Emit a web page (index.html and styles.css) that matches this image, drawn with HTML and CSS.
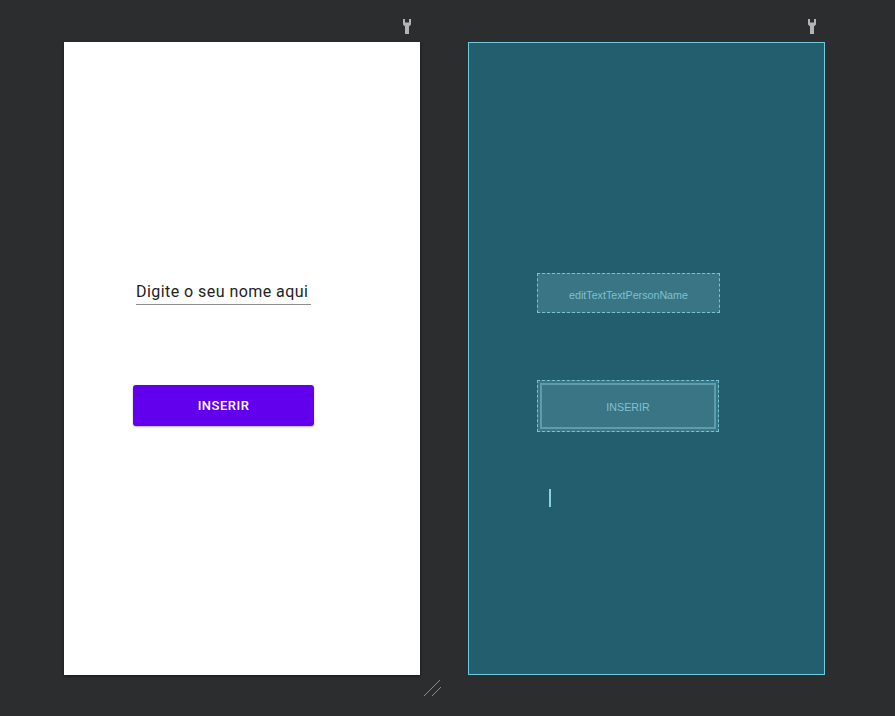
FILE: index.html
```html
<!DOCTYPE html>
<html>
<head>
<meta charset="utf-8">
<link rel="stylesheet" href="styles.css">
</head>
<body>
<div class="surface">
  <div class="panel">
    <div class="panel-head">
      <svg class="wrench" width="8" height="15" viewBox="0 0 8 15"><path d="M0 0h2v3.5h4V0h2v5.5L6 7.5V15H2V7.5L0 5.5z" fill="#b4b4b4"/></svg>
    </div>
    <div class="screen design">
      <div class="field">Digite o seu nome aqui</div>
      <div class="btn">INSERIR</div>
    </div>
  </div>
  <div class="panel">
    <div class="panel-head">
      <svg class="wrench" width="8" height="15" viewBox="0 0 8 15"><path d="M0 0h2v3.5h4V0h2v5.5L6 7.5V15H2V7.5L0 5.5z" fill="#b4b4b4"/></svg>
    </div>
    <div class="screen blueprint">
      <div class="bp-field">editTextTextPersonName</div>
      <div class="bp-btn"><div class="bp-btn-inner">INSERIR</div></div>
      <div class="bp-cursor"></div>
    </div>
  </div>
  <svg class="resize" width="20" height="18" viewBox="0 0 20 18"><path d="M1 17L17 1M9 17L18 8" stroke="#8a8a8a" stroke-width="1" fill="none"/></svg>
</div>
</body>
</html>
```
FILE: styles.css
```css
html, body {
  margin: 0;
  padding: 0;
  background: #2c2d2f;
  width: 895px;
  height: 716px;
  overflow: hidden;
}
.surface {
  position: relative;
  display: flex;
  gap: 48px;
  padding: 18px 0 0 64px;
}
.panel {
  display: flex;
  flex-direction: column;
}
.panel-head {
  height: 24px;
  display: flex;
  justify-content: flex-end;
  padding-right: 9px;
}
.wrench {
  display: block;
  margin-top: 1px;
}
.screen {
  box-sizing: border-box;
  height: 633px;
  display: flex;
  flex-direction: column;
  align-items: flex-start;
}
.design {
  width: 356px;
  background: #ffffff;
  box-shadow: 0 1px 3px rgba(0,0,0,0.5);
}
.field {
  margin: 240px 0 0 72px;
  width: 175px;
  box-sizing: border-box;
  font-family: Roboto, "Liberation Sans", sans-serif;
  font-size: 16px;
  letter-spacing: 0.45px;
  color: #222222;
  padding-bottom: 3px;
  border-bottom: 1px solid #8e8e8e;
  line-height: 19px;
  white-space: nowrap;
}
.btn {
  margin: 80px 0 0 69px;
  width: 181px;
  height: 41px;
  background: #6200ee;
  border-radius: 3px;
  box-shadow: 0 1px 2px rgba(0,0,0,0.3);
  color: #ffffff;
  font-family: Roboto, "Liberation Sans", sans-serif;
  font-weight: 500;
  font-size: 13px;
  letter-spacing: 0.5px;
  display: flex;
  align-items: center;
  justify-content: center;
}
.blueprint {
  width: 357px;
  background: #235e6f;
  border: 1px solid #6ccbdc;
}
.bp-field {
  margin: 230px 0 0 68px;
  width: 183px;
  height: 40px;
  box-sizing: border-box;
  border: 1px dashed #74c4d6;
  background: #3a7585;
  color: #7ec1d2;
  font-family: "Liberation Sans", sans-serif;
  font-size: 10.7px;
  padding-top: 3px;
  display: flex;
  align-items: center;
  justify-content: center;
}
.bp-btn {
  margin: 67px 0 0 68px;
  width: 182px;
  height: 52px;
  box-sizing: border-box;
  border: 1px dashed #74c4d6;
  background: #3a7585;
  padding: 2px;
}
.bp-btn-inner {
  height: 100%;
  box-sizing: border-box;
  border: 2px solid #5d9caa;
  color: #7ec1d2;
  font-family: "Liberation Sans", sans-serif;
  font-size: 10.7px;
  padding-top: 1px;
  display: flex;
  align-items: center;
  justify-content: center;
}
.bp-cursor {
  margin: 57px 0 0 80px;
  width: 1.5px;
  height: 18px;
  background: #86d2e2;
}
.resize {
  position: absolute;
  left: 423px;
  top: 679px;
}
```
